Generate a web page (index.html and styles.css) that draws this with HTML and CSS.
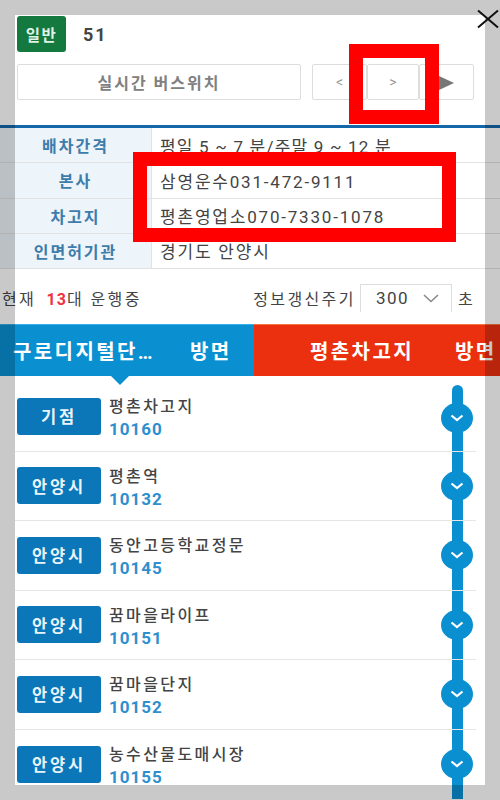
FILE: index.html
```html
<!DOCTYPE html>
<html lang="ko">
<head>
    <meta charset="UTF-8">
    <meta name="viewport" content="width=device-width, initial-scale=1.0">
    <link rel="stylesheet" href="styles.css">
    <title>51</title>
</head>
<body>

<div class="route-head">
    <span class="route-type">일반</span>
    <span class="route-no">51</span>
</div>

<div class="route-btns">
    <button class="btn btn-live">실시간 버스위치</button>
    <div class="btn-group">
        <button class="btn btn-nav">&lt;</button>
        <button class="btn btn-nav">&gt;</button>
        <button class="btn btn-nav"><span class="play"></span></button>
    </div>
</div>

<div class="info">
    <div class="info-row"><div class="info-key">배차간격</div><div class="info-val info-val-tight">평일 5 ~ 7 분/주말 9 ~ 12 분</div></div>
    <div class="info-row"><div class="info-key">본사</div><div class="info-val">삼영운수031-472-9111</div></div>
    <div class="info-row"><div class="info-key">차고지</div><div class="info-val">평촌영업소070-7330-1078</div></div>
    <div class="info-row"><div class="info-key">인면허기관</div><div class="info-val">경기도 안양시</div></div>
</div>

<div class="status">
    <div class="running">현재 <b>13</b>대 운행중</div>
    <div class="refresh">
        <span>정보갱신주기</span>
        <div class="select">
            <span>300</span>
            <svg width="16" height="9" viewBox="0 0 16 9"><path d="M1 1l7 6.5L15 1" fill="none" stroke="#8a8a8a" stroke-width="1.6"/></svg>
        </div>
        <span>초</span>
    </div>
</div>

<div class="tabs">
    <div class="tab tab-up"><span class="tab-name">구로디지털단…</span><span class="tab-dir">방면</span></div>
    <div class="tab tab-down"><span class="tab-name">평촌차고지</span><span class="tab-dir">방면</span></div>
</div>

<div class="stops">
    <div class="stop">
        <div class="stop-area">기점</div>
        <div class="stop-info"><div class="stop-name">평촌차고지</div><div class="stop-id">10160</div></div>
        <div class="track track-first"><span class="dot"><svg width="14" height="8" viewBox="0 0 14 8"><path d="M1.5 1.5L7 6l5.500-4.500" fill="none" stroke="#fff" stroke-width="2.200"/></svg></span></div>
    </div>
    <div class="stop">
        <div class="stop-area">안양시</div>
        <div class="stop-info"><div class="stop-name">평촌역</div><div class="stop-id">10132</div></div>
        <div class="track"><span class="dot"><svg width="14" height="8" viewBox="0 0 14 8"><path d="M1.5 1.5L7 6l5.500-4.500" fill="none" stroke="#fff" stroke-width="2.200"/></svg></span></div>
    </div>
    <div class="stop">
        <div class="stop-area">안양시</div>
        <div class="stop-info"><div class="stop-name">동안고등학교정문</div><div class="stop-id">10145</div></div>
        <div class="track"><span class="dot"><svg width="14" height="8" viewBox="0 0 14 8"><path d="M1.5 1.5L7 6l5.500-4.500" fill="none" stroke="#fff" stroke-width="2.200"/></svg></span></div>
    </div>
    <div class="stop">
        <div class="stop-area">안양시</div>
        <div class="stop-info"><div class="stop-name">꿈마을라이프</div><div class="stop-id">10151</div></div>
        <div class="track"><span class="dot"><svg width="14" height="8" viewBox="0 0 14 8"><path d="M1.5 1.5L7 6l5.500-4.500" fill="none" stroke="#fff" stroke-width="2.200"/></svg></span></div>
    </div>
    <div class="stop">
        <div class="stop-area">안양시</div>
        <div class="stop-info"><div class="stop-name">꿈마을단지</div><div class="stop-id">10152</div></div>
        <div class="track"><span class="dot"><svg width="14" height="8" viewBox="0 0 14 8"><path d="M1.5 1.5L7 6l5.500-4.500" fill="none" stroke="#fff" stroke-width="2.200"/></svg></span></div>
    </div>
    <div class="stop">
        <div class="stop-area">안양시</div>
        <div class="stop-info"><div class="stop-name">농수산물도매시장</div><div class="stop-id">10155</div></div>
        <div class="track"><span class="dot"><svg width="14" height="8" viewBox="0 0 14 8"><path d="M1.5 1.5L7 6l5.500-4.500" fill="none" stroke="#fff" stroke-width="2.200"/></svg></span></div>
    </div>
</div>

<!-- dimmed page around the popup, then the things drawn on top of the screenshot -->
<div class="dim"></div>
<svg class="close" width="24" height="20" viewBox="0 0 24 20"><path d="M2 1.500L22 18.500M22 1.500L2 18.500" fill="none" stroke="#111" stroke-width="2"/></svg>
<div class="mark mark-nav"></div>
<div class="mark mark-info"></div>

</body>
</html>
```

FILE: styles.css
```css
* {
    box-sizing: border-box;
}

html, body {
    height: 800px;
}

body {
    position: relative;
    margin: 0;
    overflow: hidden;
    background: #fff;
    color: #444;
    font-family: Roboto, "Noto Sans CJK KR", sans-serif;
    font-size: 15px;
}

.route-head {
    display: flex;
    align-items: center;
    gap: 17px;
    margin: 16px 0 0 17px;
    height: 36px;
}

.route-type {
    display: flex;
    justify-content: center;
    align-items: center;
    width: 49px;
    height: 36px;
    border-radius: 3px;
    background: #14793f;
    color: #dff3e6;
    font-size: 15.5px;
    font-weight: 700;
    letter-spacing: 1.500px;
}

.route-no {
    font-size: 18px;
    font-weight: 700;
    letter-spacing: 2px;
}

.route-btns {
    display: flex;
    gap: 11px;
    margin: 12px 26px 0 17px;
    height: 36px;
}

.btn {
    border: 1px solid #ddd;
    border-radius: 2px;
    background: #fff;
    color: #808080;
    font-family: inherit;
    padding: 0;
}

.btn-live {
    flex: 1;
    font-size: 16px;
    font-weight: 700;
    letter-spacing: 2px;
}

.btn-group {
    display: flex;
    width: 162px;
}

.btn-nav {
    flex: 1;
    font-size: 14px;
    color: #999;
}

.btn-nav:nth-child(2) {
    flex: 0 0 52px;
}

.play {
    display: inline-block;
    border-left: 15px solid #777;
    border-top: 7px solid transparent;
    border-bottom: 7px solid transparent;
    vertical-align: middle;
}

.info {
    margin-top: 25px;
    border-top: 3px solid #1467a8;
}

.info-row {
    display: flex;
    height: 35.25px;
    border-bottom: 1px solid #e2e2e2;
}

.info-key {
    display: flex;
    justify-content: center;
    align-items: center;
    width: 152px;
    background: #edf4fa;
    border-right: 1px solid #e2e2e2;
    color: #3d7cab;
    font-weight: 700;
    font-size: 16px;
    letter-spacing: 2px;
}

.info-val {
    display: flex;
    align-items: center;
    padding-left: 8px;
    font-size: 17px;
    letter-spacing: 1.800px;
    color: #444;
}

.info-val-tight {
    letter-spacing: 1.200px;
}

.status {
    display: flex;
    justify-content: space-between;
    align-items: center;
    height: 55px;
    padding: 3px 25px 0 2px;
    font-size: 16px;
    letter-spacing: 2.400px;
}

.running b {
    color: #ee3344;
    margin-left: 4px;
    letter-spacing: 1px;
}

.refresh {
    display: flex;
    align-items: center;
    gap: 4px;
}

.select {
    display: flex;
    justify-content: space-between;
    align-items: center;
    width: 92px;
    height: 28px;
    margin: -1px 2px 0 0;
    padding: 0 12px 0 15px;
    border: 1px solid #ddd;
    border-bottom: 0;
    font-size: 17px;
    letter-spacing: 1.500px;
}

.tabs {
    display: flex;
    height: 52px;
}

.tab {
    display: flex;
    align-items: center;
    color: #fff;
    font-size: 20px;
    font-weight: 700;
    letter-spacing: 2.400px;
    white-space: nowrap;
}

.tab-up {
    position: relative;
    width: 254px;
    padding-left: 13px;
    background: #0a8fd0;
    border-top: 1px solid #35aee6;
}

.tab-up::after {
    content: "";
    position: absolute;
    left: 111px;
    top: 51px;
    border-top: 9px solid #0a8fd0;
    border-left: 9px solid transparent;
    border-right: 9px solid transparent;
}

.tab-down {
    flex: 1;
    padding-left: 56px;
    background: #eb3010;
    border-top: 1px solid #f9743f;
}

.tab-up .tab-dir {
    margin-left: 35px;
}

.tab-down .tab-dir {
    margin-left: 41px;
}

.stops {
    margin: 6px 24px 0 15px;
}

.stop {
    display: flex;
    align-items: center;
    height: 69.5px;
    padding-left: 2px;
    border-bottom: 1px solid #e6e6e6;
}

.stop:last-child {
    border-bottom: 0;
}

.stop-area {
    display: flex;
    justify-content: center;
    align-items: center;
    width: 84px;
    height: 37px;
    border-radius: 3px;
    background: #0b76b8;
    color: #e8f4fb;
    font-size: 16.5px;
    font-weight: 700;
    letter-spacing: 2.800px;
}

.stop-info {
    margin: 4px 0 0 8px;
    line-height: 23px;
}

.stop-name {
    font-size: 16px;
    font-weight: 500;
    letter-spacing: 2.400px;
}

.stop-id {
    color: #2f8fce;
    font-size: 17px;
    font-weight: 700;
    letter-spacing: 1px;
}

.track {
    display: flex;
    justify-content: center;
    align-items: center;
    align-self: stretch;
    width: 11px;
    margin-left: auto;
    margin-right: 13.5px;
    background: #0a8fd0;
}

.track-first {
    margin-top: 3px;
    border-radius: 6px 6px 0 0;
}

.dot {
    display: flex;
    flex-shrink: 0;
    justify-content: center;
    align-items: center;
    width: 32px;
    height: 30px;
    border-radius: 50%;
    background: #0a8fd0;
}

.dim {
    position: absolute;
    left: 15px;
    top: 15px;
    width: 470px;
    height: 770px;
    box-shadow: 0 0 0 800px rgba(0, 0, 0, 0.21);
}

.close {
    position: absolute;
    left: 476px;
    top: 9px;
}

.mark {
    position: absolute;
    border: 14px solid #f00;
}

.mark-nav {
    left: 349px;
    top: 44px;
    width: 90px;
    height: 80px;
}

.mark-info {
    left: 133px;
    top: 152px;
    width: 323px;
    height: 90px;
}
```
